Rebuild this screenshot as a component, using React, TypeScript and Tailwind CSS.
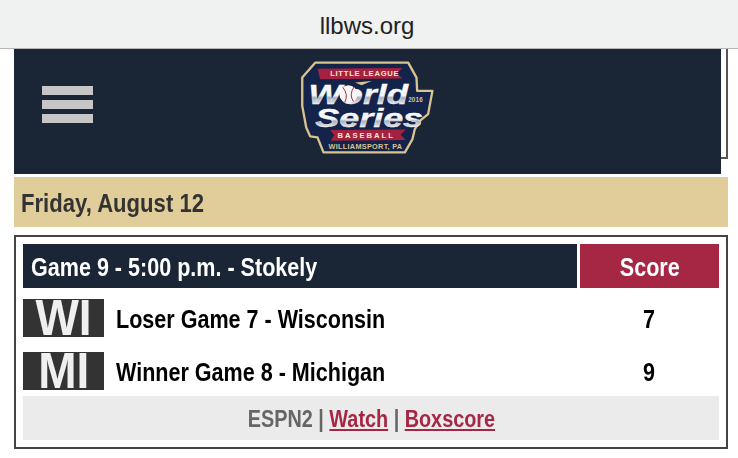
const sans = "font-['Liberation_Sans',sans-serif]";

function Logo() {
  return (
    <svg width="135" height="93" viewBox="60 35 405 280" className="block" fontFamily="Liberation Sans" fontWeight="700">
      <defs>
        <linearGradient id="chrome" x1="0" y1="0" x2="0" y2="1">
          <stop offset="0" stopColor="#ffffff" />
          <stop offset="0.55" stopColor="#f2f3f5" />
          <stop offset="0.62" stopColor="#a9aeb8" />
          <stop offset="0.8" stopColor="#dfe1e6" />
          <stop offset="1" stopColor="#ffffff" />
        </linearGradient>
      </defs>
      <path d="M105 40 L385 40 L410 85 L412 125 L458 125 L445 195 L420 215 L405 240 L398 270 L375 310 L130 310 L112 265 L90 262 L78 235 L66 170 L66 85 Z" fill="#14234a" stroke="#d8c48e" strokeWidth="7" strokeLinejoin="round" />
      <path d="M112 58 L368 56 L350 72 L368 88 L120 90 Z" fill="#a6203f" />
      <text x="150" y="81" fill="#f3ead2" fontSize="23" letterSpacing="2.2">LITTLE LEAGUE</text>
      <text x="85" y="163" fill="url(#chrome)" stroke="#ffffff" strokeWidth="1" fontSize="84" fontStyle="italic" textLength="300" lengthAdjust="spacingAndGlyphs">World</text>
      <circle cx="205" cy="135" r="27" fill="#f6f6f6" />
      <path d="M188 114 Q206 136 194 160 M222 113 Q206 136 220 157" stroke="#b8243f" strokeWidth="3" fill="none" />
      <path d="M225 100 L275 95 L245 108 Z" fill="#d8c48e" />
      <text x="385" y="158" fill="#d8c48e" fontSize="19" letterSpacing="0.5">2016</text>
      <text x="105" y="233" fill="url(#chrome)" stroke="#ffffff" strokeWidth="1" fontSize="78" fontStyle="italic" textLength="325" lengthAdjust="spacingAndGlyphs">Series</text>
      <path d="M150 243 L378 241 L362 257 L378 273 L152 275 L162 258 Z" fill="#a6203f" />
      <text x="172" y="268" fill="#f3ead2" fontSize="23" letterSpacing="6">BASEBALL</text>
      <text x="145" y="299" fill="#d8c48e" fontSize="22" letterSpacing="0.9">WILLIAMSPORT, PA</text>
    </svg>
  );
}

function Narrow({ children, origin = "origin-left" }: { children: React.ReactNode; origin?: string }) {
  return <span className={`inline-block whitespace-nowrap scale-x-[0.862] ${origin}`}>{children}</span>;
}

function Team({ code, name, score }: { code: string; name: string; score: string }) {
  return (
    <div className="flex items-center h-[38px]">
      <div className="w-[81px] h-[38px] bg-[#333] flex items-center justify-center text-[#efefef] text-[50px] font-bold leading-[38px] shrink-0">
        <span className="inline-block scale-x-[0.92] blur-[0.6px]">{code}</span>
      </div>
      <div className="flex-1 pl-3 pt-[2px] text-[25px] font-bold text-black leading-none">
        <Narrow>{name}</Narrow>
      </div>
      <div className="w-[139px] pr-[2px] pt-[2px] text-center text-[25px] font-bold text-black leading-none">
        <Narrow origin="origin-center">{score}</Narrow>
      </div>
    </div>
  );
}

export default function App() {
  return (
    <div className={`w-[738px] h-[458px] bg-white overflow-hidden relative ${sans}`}>
      <div className="h-[49px] bg-[#f0f1f1] border-b border-[#b5b5b5] flex items-center justify-center pt-[3px] pr-[4px] text-[24px] text-[#222]">
        llbws.org
      </div>
      <div className="absolute left-[700px] top-[49px] w-[28px] h-[110px] border-r-2 border-b-2 border-[#555]" />
      <div className="relative w-[707px] h-[125px] ml-[14px] bg-[#1a2636] flex items-center">
        <div className="ml-[28px] -mt-[15px] w-[51px] flex flex-col gap-[5px]">
          <div className="h-[9px] bg-[#c6c6c6]" />
          <div className="h-[9px] bg-[#c6c6c6]" />
          <div className="h-[9px] bg-[#c6c6c6]" />
        </div>
        <div className="ml-[207px] -mt-[8px]">
          <Logo />
        </div>
      </div>
      <div className="mt-[3px] ml-[14px] w-[714px] h-[50px] bg-[#e0cd9a] flex items-center pl-[7px] pt-[2px] text-[26px] font-bold text-[#333] leading-none">
        <span className="inline-block whitespace-nowrap scale-x-[0.85] origin-left">Friday, August 12</span>
      </div>
      <div className="mt-[8px] ml-[14px] w-[714px] h-[214px] border-2 border-[#444] pt-[7px] px-[7px]">
        <div className="flex gap-[3px] h-[44px]">
          <div className="w-[555px] bg-[#1a2636] flex items-center pl-[8px] pt-[2px] text-white text-[25px] font-bold leading-none">
            <Narrow>Game 9 - 5:00 p.m. - Stokely</Narrow>
          </div>
          <div className="w-[139px] bg-[#a52743] flex items-center justify-center pt-[2px] text-white text-[25px] font-bold leading-none">
            <Narrow origin="origin-center">Score</Narrow>
          </div>
        </div>
        <div className="mt-[11px]">
          <Team code="WI" name="Loser Game 7 - Wisconsin" score="7" />
        </div>
        <div className="mt-[15px]">
          <Team code="MI" name="Winner Game 8 - Michigan" score="9" />
        </div>
        <div className="mt-[6px] h-[44px] bg-[#ebebeb] flex items-center justify-center pt-[2px] text-[23px] font-bold text-[#666] leading-none">
          <Narrow origin="origin-center">
            ESPN2 | <span className="text-[#a52743] underline">Watch</span> | <span className="text-[#a52743] underline">Boxscore</span>
          </Narrow>
        </div>
      </div>
    </div>
  );
}
